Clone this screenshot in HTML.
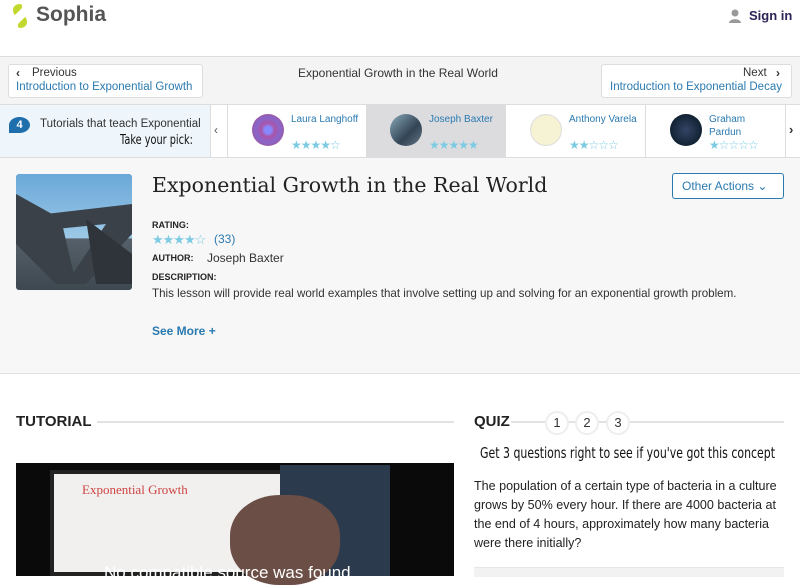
<!DOCTYPE html>
<html><head><meta charset="utf-8"><style>
*{box-sizing:border-box;margin:0;padding:0}
body{width:800px;height:576px;overflow:hidden;font-family:"Liberation Sans",sans-serif;background:#fff;position:relative;color:#333}
.a{position:absolute}
.blue{color:#2a7ab0}
.hand{font-family:"Comic Sans MS","DejaVu Sans",cursive;transform-origin:0 0}
.star{color:#7ccbe3;font-size:12px;letter-spacing:-1px}
.card{position:absolute;top:105px;height:52px;width:140px;border-right:1px solid #ddd;background:#fff}
.card .av{position:absolute;left:24px;top:9px;width:32px;height:32px;border-radius:50%}
.card .nm{position:absolute;left:63px;top:8px;font-size:10px;color:#2a7ab0;line-height:13px}
.card .st{position:absolute;left:63px;top:33px}
</style></head><body>
<div class="a" style="left:0;top:0;width:800px;height:57px;border-bottom:1px solid #ddd;background:#fff"></div>
<svg class="a" style="left:10px;top:3px" width="20" height="26" viewBox="0 0 20 26"><path d="M10 1 C3 1 1 8 5 12 L11 6 C13 4 12 1 10 1Z" fill="#c3d82e"/><path d="M10 25 C17 25 19 18 15 14 L9 20 C7 22 8 25 10 25Z" fill="#c3d82e"/></svg>
<div class="a" style="left:36px;top:3px;font-size:21px;font-weight:bold;color:#555">Sophia</div>
<svg class="a" style="left:728px;top:9px" width="14" height="14" viewBox="0 0 14 14"><circle cx="7" cy="4" r="3.5" fill="#999"/><path d="M1 14 C1 9 13 9 13 14Z" fill="#999"/></svg>
<div class="a" style="left:749px;top:8px;font-size:13px;font-weight:bold;color:#2d2357">Sign in</div>
<div class="a" style="left:0;top:57px;width:800px;height:48px;background:#f4f4f4;border-bottom:1px solid #ddd"></div>
<div class="a" style="left:8px;top:64px;width:195px;height:34px;background:#fff;border:1px solid #ddd;border-radius:3px"></div>
<div class="a" style="left:16px;top:66px;font-size:12px;font-weight:bold">‹</div>
<div class="a" style="left:32px;top:67px;font-size:11.5px">Previous</div>
<div class="a blue" style="left:16px;top:81px;font-size:11.5px">Introduction to Exponential Growth</div>
<div class="a" style="left:298px;top:66px;font-size:12px">Exponential Growth in the Real World</div>
<div class="a" style="left:601px;top:64px;width:191px;height:34px;background:#fff;border:1px solid #ddd;border-radius:3px"></div>
<div class="a" style="left:743px;top:67px;font-size:11.5px">Next</div>
<div class="a" style="left:776px;top:66px;font-size:12px;font-weight:bold">›</div>
<div class="a blue" style="left:610px;top:81px;font-size:11.5px">Introduction to Exponential Decay</div>
<div class="a" style="left:0;top:105px;width:800px;height:53px;background:#fff;border-bottom:1px solid #ddd"></div>
<div class="a" style="left:0;top:105px;width:211px;height:52px;background:#eef5fb;border-right:1px solid #ddd"></div>
<div class="a" style="left:9px;top:117px;width:21px;height:16px;border-radius:50% 50% 50% 0;background:#1f6fad;color:#fff;font-size:11px;font-weight:bold;text-align:center;line-height:16px">4</div>
<div class="a" style="left:40px;top:118px;font-size:11.5px;white-space:nowrap;width:160px;overflow:hidden">Tutorials that teach Exponential</div>
<div class="a hand" style="left:120px;top:133px;font-size:13px;color:#111;transform:scaleX(.75)">Take your pick:</div>
<div class="a" style="left:214px;top:123px;font-size:12px;color:#555">‹</div>
<div class="card" style="left:227px;border-left:1px solid #ddd"><div class="av" style="background:radial-gradient(circle,#88f 0 15%,#a5a 30%,#86c 55%,#b46 100%)"></div><div class="nm">Laura Langhoff</div><div class="st star">★★★★☆</div></div>
<div class="card" style="left:366px;background:#dcdcdf"><div class="av" style="background:linear-gradient(135deg,#8ab 0,#345 60%,#678)"></div><div class="nm">Joseph Baxter</div><div class="st star">★★★★★</div></div>
<div class="card" style="left:506px"><div class="av" style="background:#f6f2d4;border:1px solid #ddd"></div><div class="nm">Anthony Varela</div><div class="st star">★★☆☆☆</div></div>
<div class="card" style="left:646px"><div class="av" style="background:radial-gradient(circle,#346 0,#123 70%)"></div><div class="nm">Graham<br>Pardun</div><div class="st star">★☆☆☆☆</div></div>
<div class="a" style="left:789px;top:122px;font-size:13px;font-weight:bold">›</div>
<div class="a" style="left:0;top:158px;width:800px;height:216px;background:#f7f7f7;border-bottom:1px solid #e2e2e2"></div>
<div class="a" style="left:16px;top:174px;width:116px;height:116px;border-radius:3px;background:linear-gradient(180deg,#6aa8d8 0,#9cc8e6 55%,#55606a 56%,#3e4850 100%);overflow:hidden"><svg width="116" height="116" viewBox="0 0 116 116"><path d="M0 20 L45 45 L60 110 L40 110 L0 70Z M30 40 L116 30 L116 60 L70 110 L50 110 L90 50 L40 55Z" fill="#3a4148"/><path d="M70 45 L116 80 L116 110 L80 110 Z" fill="#2e343a"/></svg></div>
<div class="a" style="left:152px;top:173px;font-family:'DejaVu Serif','Liberation Serif',serif;font-size:20.5px;color:#222">Exponential Growth in the Real World</div>
<div class="a" style="left:672px;top:173px;width:112px;height:26px;border:1px solid #2a7ab0;border-radius:3px;background:#fff;font-size:12px;color:#2a7ab0;line-height:24px;padding-left:9px">Other Actions ⌄</div>
<div class="a" style="left:152px;top:220px;font-size:9px;font-weight:bold;color:#222">RATING:</div>
<div class="a star" style="left:152px;top:232px;font-size:13px">★★★★☆</div>
<div class="a blue" style="left:214px;top:232px;font-size:12px">(33)</div>
<div class="a" style="left:152px;top:253px;font-size:9px;font-weight:bold;color:#222">AUTHOR:</div>
<div class="a" style="left:207px;top:251px;font-size:12px">Joseph Baxter</div>
<div class="a" style="left:152px;top:272px;font-size:9px;font-weight:bold;color:#222">DESCRIPTION:</div>
<div class="a" style="left:152px;top:287px;font-size:11.6px">This lesson will provide real world examples that involve setting up and solving for an exponential growth problem.</div>
<div class="a blue" style="left:152px;top:324px;font-size:12px;font-weight:bold">See More +</div>
<div class="a" style="left:16px;top:413px;font-size:15px;font-weight:bold;color:#222">TUTORIAL</div>
<div class="a" style="left:97px;top:421px;width:357px;height:2px;background:#e2e2e2"></div>
<div class="a" style="left:16px;top:463px;width:438px;height:113px;background:#0a0a0a"></div>
<div class="a" style="left:50px;top:470px;width:245px;height:106px;background:#f2f0ee;border:4px solid #222"></div>
<div class="a" style="left:280px;top:465px;width:110px;height:111px;background:#2b3a4c"></div>
<div class="a" style="left:230px;top:495px;width:110px;height:90px;border-radius:45%;background:#6b4e45"></div>
<div class="a" style="left:82px;top:482px;font-size:13px;color:#c44;font-family:'Liberation Serif',serif">Exponential Growth</div>
<div class="a" style="left:104px;top:563px;font-size:17px;color:#fff">No compatible source was found</div>
<div class="a" style="left:474px;top:413px;font-size:15px;font-weight:bold;color:#222">QUIZ</div>
<div class="a" style="left:511px;top:421px;width:273px;height:2px;background:#e2e2e2"></div>
<div class="a" style="left:545px;top:411px;width:24px;height:24px;border-radius:50%;background:#fff;border:2px solid #eee;text-align:center;line-height:20px;font-size:13px">1</div>
<div class="a" style="left:575px;top:411px;width:24px;height:24px;border-radius:50%;background:#fff;border:2px solid #eee;text-align:center;line-height:20px;font-size:13px">2</div>
<div class="a" style="left:606px;top:411px;width:24px;height:24px;border-radius:50%;background:#fff;border:2px solid #eee;text-align:center;line-height:20px;font-size:13px">3</div>
<div class="a hand" style="left:480px;top:444px;font-size:15px;color:#111;white-space:nowrap;transform:scaleX(.73)">Get 3 questions right to see if you've got this concept</div>
<div class="a" style="left:474px;top:476px;width:318px;font-size:13px;line-height:19px;color:#222;transform:scaleX(.965);transform-origin:0 0">The population of a certain type of bacteria in a culture grows by 50% every hour. If there are 4000 bacteria at the end of 4 hours, approximately how many bacteria were there initially?</div>
<div class="a" style="left:474px;top:567px;width:310px;height:10px;background:#f2f2f2;border-top:1px solid #e6e6e6"></div>
</body></html>
